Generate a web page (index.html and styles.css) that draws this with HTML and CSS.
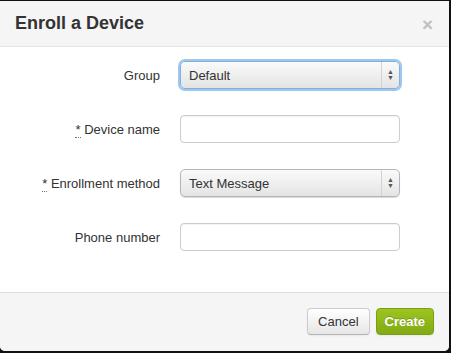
FILE: index.html
```html
<!DOCTYPE html>
<html lang="en">
<head>
    <meta charset="UTF-8">
    <title>Enroll a Device</title>
    <link rel="stylesheet" href="styles.css">
</head>
<body>
    <div class="modal">
        <div class="modal-header">
            <h3>Enroll a Device</h3>
            <span class="close">&times;</span>
        </div>

        <form class="modal-body">
            <label class="field-label">Group</label>
            <div class="select focus">
                <span class="select-value">Default</span>
                <span class="select-arrows">&#9650;<br>&#9660;</span>
            </div>

            <label class="field-label"><abbr>*</abbr> Device name</label>
            <input class="text-input" type="text">

            <label class="field-label"><abbr>*</abbr> Enrollment method</label>
            <div class="select">
                <span class="select-value">Text Message</span>
                <span class="select-arrows">&#9650;<br>&#9660;</span>
            </div>

            <label class="field-label">Phone number</label>
            <input class="text-input" type="text">
        </form>

        <div class="modal-footer">
            <button class="btn">Cancel</button>
            <button class="btn btn-create">Create</button>
        </div>
    </div>
</body>
</html>
```

FILE: styles.css
```css
body {
    margin: 0;
    padding: 1px 0 0 0;
    background: #111;
    font-family: 'Liberation Sans', Arial, sans-serif;
    font-size: 13px;
    color: #333;
    height: 352px;
    box-sizing: border-box;
    overflow: hidden;
}

/* Dialog */
.modal {
    width: 449px;
    height: 350px;
    background: #fff;
    border-radius: 0 0 5px 5px;
    overflow: hidden;
    display: flex;
    flex-direction: column;
}

.modal-header {
    height: 45px;
    background: #f5f5f5;
    border-bottom: 1px solid #e5e5e5;
    display: flex;
    align-items: center;
    justify-content: space-between;
    padding: 0 16px 0 15px;
}

.modal-header h3 {
    margin: 0;
    font-size: 18px;
    font-weight: bold;
    color: #333;
}

.close {
    font-size: 19px;
    color: #c0c0c0;
    font-weight: bold;
    line-height: 1;
    margin-top: 2px;
    margin-right: 0;
}

/* Form */
.modal-body {
    flex: 1;
    display: grid;
    grid-template-columns: 160px 220px;
    grid-auto-rows: 28px;
    column-gap: 20px;
    row-gap: 26px;
    padding-top: 14px;
    margin: 0;
}

.field-label {
    text-align: right;
    align-self: center;
    font-size: 13px;
}

.field-label abbr {
    text-decoration: none;
    border-bottom: 1px dotted #777;
}

.text-input {
    box-sizing: border-box;
    height: 28px;
    width: 220px;
    margin: 0;
    border: 1px solid #ccc;
    border-radius: 4px;
    box-shadow: inset 0 1px 1px rgba(0, 0, 0, 0.05);
    background: #fff;
}

.select {
    box-sizing: border-box;
    height: 28px;
    border: 1px solid #b5b5b5;
    border-radius: 5px;
    background: linear-gradient(to bottom, #fafafa, #e4e4e4);
    display: flex;
    align-items: center;
    box-shadow: 0 1px 1px rgba(0, 0, 0, 0.15);
}

.select.focus {
    border-color: #7fb1e0;
    box-shadow: 0 0 0 2px #9fc6ec;
}

.select-value {
    flex: 1;
    padding-left: 8px;
    font-size: 13px;
    color: #333;
}

.select-arrows {
    width: 17px;
    height: 100%;
    border-left: 1px solid #d2d2d2;
    font-size: 7px;
    line-height: 6px;
    color: #555;
    display: flex;
    flex-direction: column;
    justify-content: center;
    align-items: center;
    text-align: center;
}

/* Footer */
.modal-footer {
    height: 58px;
    background: #f5f5f5;
    border-top: 1px solid #ddd;
    display: flex;
    justify-content: flex-end;
    align-items: center;
    gap: 6px;
    padding: 0 15px;
}

.btn {
    font-family: 'Liberation Sans', Arial, sans-serif;
    font-size: 13px;
    height: 27px;
    padding: 0 10px;
    border: 1px solid #ccc;
    border-bottom-color: #b3b3b3;
    border-radius: 4px;
    background: linear-gradient(to bottom, #fff, #e6e6e6);
    color: #333;
    box-shadow: 0 1px 2px rgba(0, 0, 0, 0.05);
    margin-bottom: 1px;
}

.btn-create {
    padding: 0 8px;
    color: #fff;
    font-weight: bold;
    border-color: #7a9e14;
    background: linear-gradient(to bottom, #9cc520, #82aa14);
    text-shadow: 0 -1px 0 rgba(0, 0, 0, 0.2);
}
```
